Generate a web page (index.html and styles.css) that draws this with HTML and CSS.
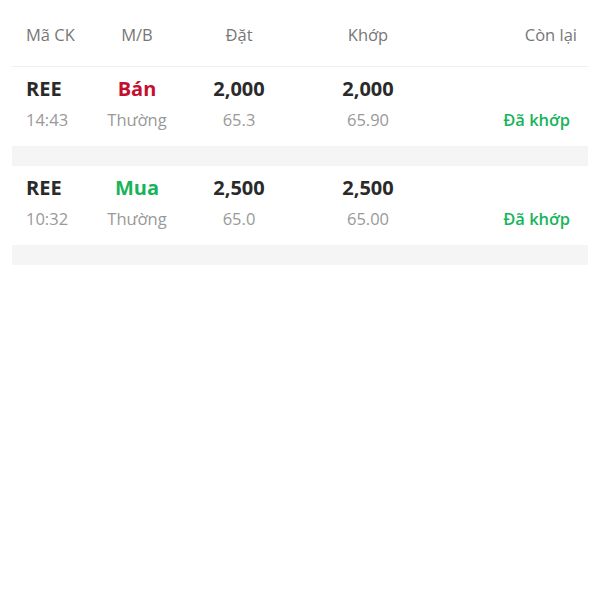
FILE: index.html
```html
<!DOCTYPE html>
<html lang="vi">
<head>
<meta charset="utf-8">
<link rel="stylesheet" href="styles.css">
</head>
<body>
<div class="page">
  <div class="header">
    <div class="c1">Mã CK</div>
    <div class="c2">M/B</div>
    <div class="c3">Đặt</div>
    <div class="c4">Khớp</div>
    <div class="c5">Còn lại</div>
  </div>
  <div class="list">
    <div class="order first">
      <div class="grid">
        <div class="c1 strong">REE</div>
        <div class="c2 strong sell">Bán</div>
        <div class="c3 strong">2,000</div>
        <div class="c4 strong">2,000</div>
        <div class="c5"></div>
        <div class="c1 sub">14:43</div>
        <div class="c2 sub">Thường</div>
        <div class="c3 sub">65.3</div>
        <div class="c4 sub">65.90</div>
        <div class="c5 status">Đã khớp</div>
      </div>
      <div class="band"></div>
    </div>
    <div class="order">
      <div class="grid">
        <div class="c1 strong">REE</div>
        <div class="c2 strong buy">Mua</div>
        <div class="c3 strong">2,500</div>
        <div class="c4 strong">2,500</div>
        <div class="c5"></div>
        <div class="c1 sub">10:32</div>
        <div class="c2 sub">Thường</div>
        <div class="c3 sub">65.0</div>
        <div class="c4 sub">65.00</div>
        <div class="c5 status">Đã khớp</div>
      </div>
      <div class="band"></div>
    </div>
  </div>
</div>
</body>
</html>
```
FILE: styles.css
```css
html, body {
  margin: 0;
  padding: 0;
  background: #fff;
}
body {
  font-family: "Open Sans", "Noto Sans", sans-serif;
  width: 600px;
  height: 600px;
}
.page {
  padding: 0 12px;
}
.header {
  display: grid;
  grid-template-columns: 64px 94px 110px 148px 1fr;
  padding: 23px 11px 19px 14px;
  font-size: 16.5px;
  line-height: 24px;
  color: #777;
}
.c1 { text-align: left; }
.c2, .c3, .c4 { text-align: center; }
.c5 { text-align: right; }
.order.first {
  border-top: 1px solid #efefef;
}
.grid {
  display: grid;
  grid-template-columns: 64px 94px 110px 148px 1fr;
  grid-template-rows: 26px 24px;
  row-gap: 6px;
  padding: 9px 18px 14px 14px;
  background: #fff;
}
.strong {
  font-size: 20px;
  font-weight: 700;
  line-height: 26px;
  color: #2a2a2a;
}
.sell { color: #c3102f; }
.buy { color: #18b45a; }
.sub {
  font-size: 16.5px;
  line-height: 24px;
  color: #999;
}
.status {
  font-size: 16.5px;
  line-height: 24px;
  font-weight: 600;
  color: #18b45a;
}
.band {
  height: 20px;
  background: #f5f5f5;
}
```
